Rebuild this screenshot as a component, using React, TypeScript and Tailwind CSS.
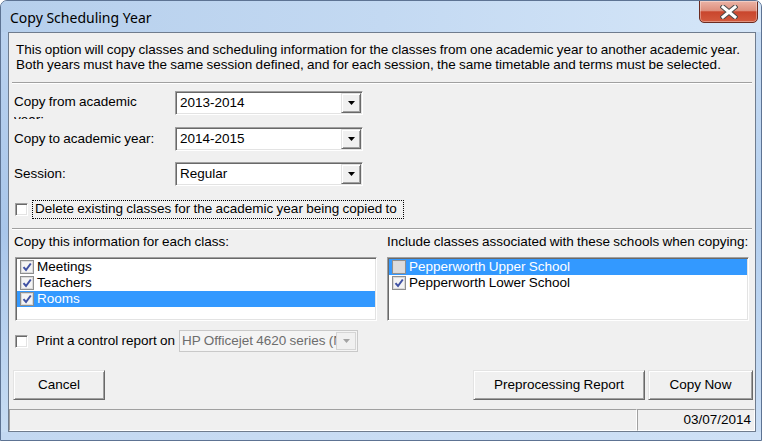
import React from 'react';

// classic 3D edges
const sunken =
  'border border-t-[#a0a0a0] border-l-[#a0a0a0] border-r-white border-b-white shadow-[inset_1px_1px_0_#696969,inset_-1px_-1px_0_#e3e3e3]';
const raised =
  'border border-t-[#e3e3e3] border-l-[#e3e3e3] border-r-[#696969] border-b-[#696969] shadow-[inset_1px_1px_0_#ffffff,inset_-1px_-1px_0_#a0a0a0]';

function Arrow({ color = '#000000' }: { color?: string }) {
  return (
    <svg width="7" height="4" viewBox="0 0 7 4">
      <path d="M0 0h7L3.5 4z" fill={color} />
    </svg>
  );
}

function Combo({ value, className = '' }: { value: string; className?: string }) {
  return (
    <div className={`flex h-[24px] w-[188px] bg-white p-[1px] ${sunken} ${className}`}>
      <div className="flex flex-1 items-center overflow-hidden whitespace-nowrap pl-[3px]">{value}</div>
      <div className={`flex w-[20px] items-center justify-center bg-[#f0f0f0] ${raised}`}>
        <Arrow />
      </div>
    </div>
  );
}

function Check() {
  return <div className={`h-[13px] w-[13px] shrink-0 bg-white ${sunken}`} />;
}

function ListCheck({ checked, dim }: { checked: boolean; dim?: boolean }) {
  return (
    <div
      className={`flex h-[14px] w-[14px] shrink-0 items-center justify-center border border-[#8e8f8f] shadow-[inset_0_0_0_1px_#d9d9d9] ${
        dim ? 'bg-[#dcdcdc]' : 'bg-[#f4f4f4]'
      }`}
    >
      {checked && (
        <svg width="10" height="10" viewBox="0 0 10 10">
          <path d="M1.5 5.2 L4 8 L8.8 1.5" fill="none" stroke="#3f51a3" strokeWidth="2" />
        </svg>
      )}
    </div>
  );
}

type Item = { label: string; checked: boolean; selected?: boolean };

function CheckList({ items }: { items: Item[] }) {
  return (
    <div className={`h-[64px] bg-white p-[1px] ${sunken}`}>
      {items.map(it => (
        <div
          key={it.label}
          className={`flex h-[16px] items-center gap-[3px] pl-[3px] ${
            it.selected ? 'bg-[#3399ff] text-white' : 'text-black'
          }`}
        >
          <ListCheck checked={it.checked} dim={it.selected && !it.checked} />
          <span className="whitespace-nowrap">{it.label}</span>
        </div>
      ))}
    </div>
  );
}

function Button({ label, className = '' }: { label: string; className?: string }) {
  return (
    <div className={`flex h-[30px] items-center justify-center bg-[#f0f0f0] ${raised} ${className}`}>{label}</div>
  );
}

function Separator({ className = '' }: { className?: string }) {
  return <div className={`mx-[3px] h-[2px] border-t border-b border-t-[#a0a0a0] border-b-white ${className}`} />;
}

function CloseGlyph() {
  return (
    <svg width="18" height="14" viewBox="0 0 18 14">
      <path d="M3 2 L15 12 M15 2 L3 12" stroke="#4a4a4a" strokeWidth="5" strokeLinecap="square" />
      <path d="M3 2 L15 12 M15 2 L3 12" stroke="#ffffff" strokeWidth="3" strokeLinecap="square" />
    </svg>
  );
}

export default function App() {
  return (
    <div className="flex h-[441px] w-[762px] flex-col overflow-hidden rounded-t-[7px] border border-[#5d7393] bg-[#bdd4ef] font-['Liberation_Sans',Arial,sans-serif] text-[13.5px] text-black [word-spacing:-0.5px]">
      {/* title bar */}
      <div className="flex h-[31px] shrink-0 items-start bg-gradient-to-r from-[#b6cfec] via-[#c3d9f2] to-[#d5e6f8]">
        <div className="pl-[9px] pt-[8px] font-['Noto_Sans',sans-serif] text-[14px] leading-[18px] text-black [word-spacing:0px]">
          Copy Scheduling Year
        </div>
        <div className="ml-auto mr-[3px] mt-[-1px] flex h-[23px] w-[59px] items-center justify-center rounded-b-[5px] border border-[#6b2b20] bg-[linear-gradient(to_bottom,#ebb3a6_0%,#de907e_45%,#c9462d_52%,#d35a3e_100%)] shadow-[inset_0_0_0_1px_rgba(255,255,255,0.35)]">
          <CloseGlyph />
        </div>
      </div>

      <div className="flex h-[400px] shrink-0">
        <div className="w-[7px] bg-gradient-to-b from-[#b9d1ee] via-[#a9c6ea] to-[#c7dcf3]" />

        {/* client area */}
        <div className="flex w-[748px] flex-col border border-[#6f7c8e] bg-[#f0f0f0]">
          <div className="pl-[7px] pt-[9px] leading-[15px]">
            <div className="whitespace-nowrap">
              This option will copy classes and scheduling information for the classes from one academic year to another academic year.
            </div>
            <div className="whitespace-nowrap">
              Both years must have the same session defined, and for each session, the same timetable and terms must be selected.
            </div>
          </div>

          <Separator className="mt-[10px]" />

          <div className="mt-[7px] flex items-start pl-[5px]">
            <div className="h-[28px] w-[161px] overflow-hidden pr-[11px] pt-[2px] leading-[18px]">
              Copy from academic year:
            </div>
            <Combo value="2013-2014" />
          </div>
          <div className="mt-[8px] flex items-center pl-[5px]">
            <div className="w-[161px]">Copy to academic year:</div>
            <Combo value="2014-2015" />
          </div>
          <div className="mt-[11px] flex items-center pl-[5px]">
            <div className="w-[161px]">Session:</div>
            <Combo value="Regular" />
          </div>

          <div className="mt-[14px] flex h-[19px] items-center pl-[6px]">
            <Check />
            <div className="ml-[4px] flex h-[19px] w-[372px] items-center border border-dotted border-black pl-[2px] whitespace-nowrap">
              Delete existing classes for the academic year being copied to
            </div>
          </div>

          <Separator className="mt-[9px]" />

          <div className="mt-[4px] grid grid-cols-[362px_362px] gap-x-[10px] px-[6px]">
            <div className="-ml-px leading-[15px]">Copy this information for each class:</div>
            <div className="leading-[15px]">Include classes associated with these schools when copying:</div>
            <div className="mt-[8px]">
              <CheckList
                items={[
                  { label: 'Meetings', checked: true },
                  { label: 'Teachers', checked: true },
                  { label: 'Rooms', checked: true, selected: true },
                ]}
              />
            </div>
            <div className="mt-[8px]">
              <CheckList
                items={[
                  { label: 'Pepperworth Upper School', checked: false, selected: true },
                  { label: 'Pepperworth Lower School', checked: true },
                ]}
              />
            </div>
          </div>

          <div className="mt-[9px] flex h-[22px] items-center pl-[6px]">
            <Check />
            <div className="ml-[8px] w-[143px] whitespace-nowrap">Print a control report on</div>
            <div className="flex h-[22px] w-[179px] border border-[#c9c9c9] bg-[#f4f4f4] p-[1px]">
              <div className="flex flex-1 items-center overflow-hidden whitespace-nowrap pl-[1px] text-[#6d6d6d]">
                HP Officejet 4620 series (Network)
              </div>
              <div className="flex w-[20px] items-center justify-center border border-[#d5d5d5] bg-[#f0f0f0]">
                <Arrow color="#a3a3a3" />
              </div>
            </div>
          </div>

          <div className="mt-[18px] flex pl-[4px] pr-[2px]">
            <Button label="Cancel" className="w-[92px]" />
            <div className="ml-auto flex gap-[3px]">
              <Button label="Preprocessing Report" className="w-[172px]" />
              <Button label="Copy Now" className="w-[105px]" />
            </div>
          </div>

          {/* status bar */}
          <div className="mt-[9px] flex h-[22px]">
            <div className="w-[628px] border border-t-[#a0a0a0] border-l-[#a0a0a0] border-r-white border-b-white" />
            <div className="flex flex-1 items-center justify-end border border-t-[#a0a0a0] border-l-[#a0a0a0] border-r-white border-b-white pr-[3px]">
              03/07/2014
            </div>
          </div>
        </div>

        <div className="w-[5px] bg-gradient-to-b from-[#c6dbf3] via-[#b4cfee] to-[#c9ddf4]" />
      </div>

      <div className="flex-1 bg-gradient-to-r from-[#c3d8f1] to-[#cfe1f6]" />
    </div>
  );
}
